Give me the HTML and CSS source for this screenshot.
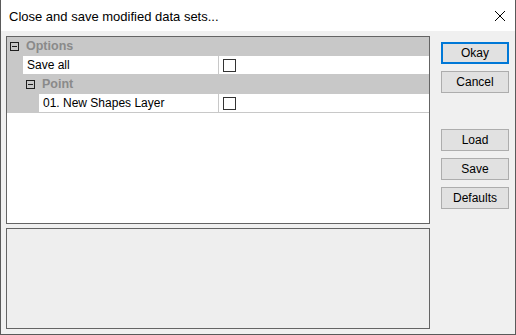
FILE: index.html
```html
<!DOCTYPE html>
<html>
<head>
<meta charset="utf-8">
<link rel="stylesheet" href="styles.css">
</head>
<body>
<div class="window">
  <div class="titlebar">
    <span class="title">Close and save modified data sets...</span>
    <svg class="close" width="12" height="12" viewBox="0 0 12 12"><path d="M1 1 L11 11 M11 1 L1 11" stroke="#000" stroke-width="1" fill="none"/></svg>
  </div>
  <div class="content">
    <div class="panels">
      <div class="grid">
        <div class="row cat">
          <span class="toggle"></span><span class="cat-label">Options</span>
        </div>
        <div class="row prop lvl1">
          <span class="name">Save all</span><span class="value"><span class="check"></span></span>
        </div>
        <div class="row cat lvl1">
          <span class="toggle"></span><span class="cat-label">Point</span>
        </div>
        <div class="row prop lvl2">
          <span class="name">01. New Shapes Layer</span><span class="value"><span class="check"></span></span>
        </div>
      </div>
      <div class="desc"></div>
    </div>
    <div class="buttons">
      <button class="btn default">Okay</button>
      <button class="btn">Cancel</button>
      <button class="btn spaced">Load</button>
      <button class="btn">Save</button>
      <button class="btn">Defaults</button>
    </div>
  </div>
</div>
</body>
</html>
```

FILE: styles.css
```css
* { box-sizing: border-box; }
html, body { margin: 0; padding: 0; }
body {
  width: 516px;
  height: 335px;
  font-family: "Liberation Sans", Arial, sans-serif;
  font-size: 12px;
  color: #000;
  background: #f0f0f0;
}
.window {
  width: 516px;
  height: 335px;
  border: 1px solid #5a5a5a;
  border-top: none;
  display: flex;
  flex-direction: column;
  background: #f0f0f0;
}
.titlebar {
  height: 31px;
  background: #fff;
  display: flex;
  align-items: center;
  justify-content: space-between;
  padding: 0 9px 0 8px;
}
.title {
  font-size: 13px;
  padding-top: 2px;
}
.close { margin-top: 1px; }
.content {
  flex: 1;
  display: flex;
  padding: 5px 5px 5px 5px;
  gap: 11px;
}
.panels {
  width: 424px;
  display: flex;
  flex-direction: column;
  gap: 4px;
}
.grid {
  height: 188px;
  border: 1px solid #646464;
  background: #fff;
}
.desc {
  height: 101px;
  border: 1px solid #646464;
  background: #eeeeee;
}
.row {
  height: 19px;
  display: flex;
  align-items: center;
  border-bottom: 1px solid #c8c8c8;
}
.cat {
  background: #c8c8c8;
}
.cat.lvl1 { padding-left: 16px; }
.toggle {
  width: 9px;
  height: 9px;
  border: 1px solid #1e1e1e;
  margin-left: 3px;
  margin-right: 7px;
  position: relative;
  background: #c8c8c8;
}
.toggle::after {
  content: "";
  position: absolute;
  left: 1px;
  right: 1px;
  top: 3px;
  height: 1px;
  background: #1e1e1e;
}
.cat-label {
  font-weight: bold;
  color: #8a8a8a;
  font-size: 12.5px;
}
.prop { background: #fff; }
.prop.lvl1 { border-left: 16px solid #c8c8c8; }
.prop.lvl2 { border-left: 32px solid #c8c8c8; }
.name {
  height: 100%;
  display: flex;
  align-items: center;
  padding-left: 4px;
  border-right: 1px solid #c8c8c8;
}
.lvl1 .name { width: 196px; }
.lvl2 .name { width: 180px; }
.value {
  flex: 1;
  height: 100%;
  display: flex;
  align-items: center;
  padding-left: 4px;
}
.check {
  width: 13px;
  height: 13px;
  border: 1px solid #333;
  background: #fff;
}
.buttons {
  display: flex;
  flex-direction: column;
  gap: 7px;
  padding-top: 6px;
}
.btn {
  width: 68px;
  height: 22px;
  background: #e1e1e1;
  border: 1px solid #adadad;
  font-family: inherit;
  font-size: 12px;
  color: #000;
  padding: 0;
}
.btn.default {
  border: 2px solid #0078d7;
}
.btn.spaced { margin-top: 29px; }
```
